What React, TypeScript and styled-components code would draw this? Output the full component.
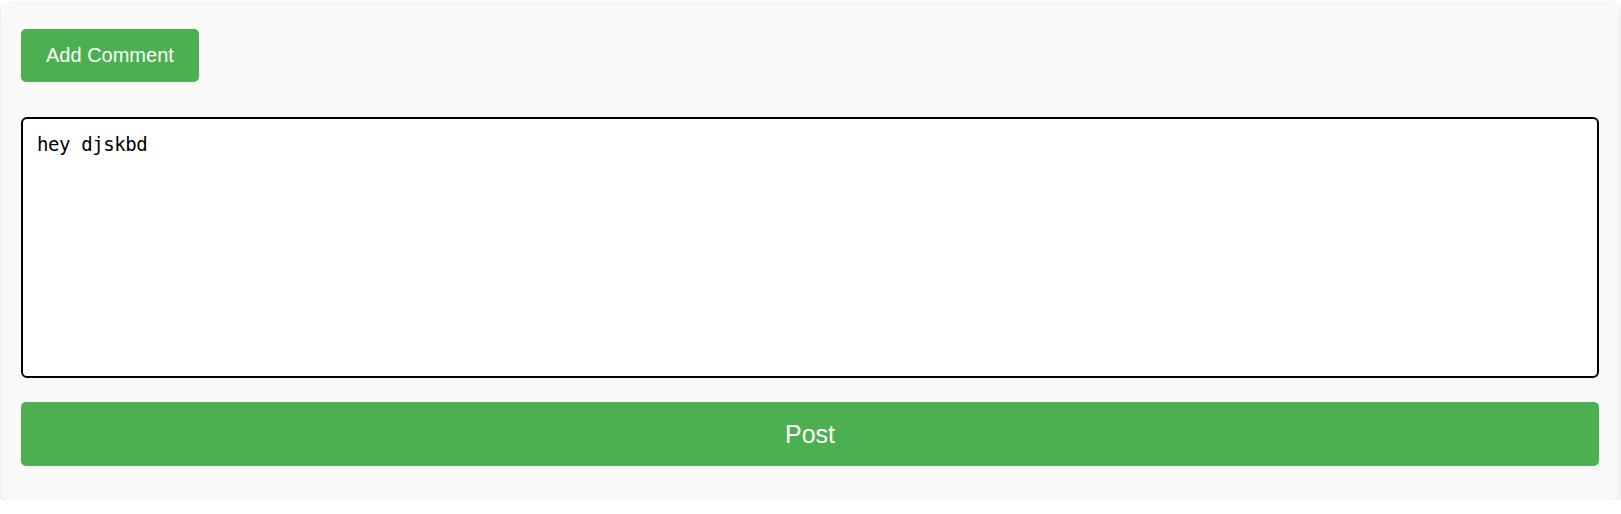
import React, { useState } from "react";
import styled, { createGlobalStyle } from "styled-components";

const GlobalStyle = createGlobalStyle`
  html, body {
    margin: 0;
    padding: 0;
    background: #ffffff;
  }
  body {
    padding-top: 4px;
    font-family: "Liberation Sans", Arial, sans-serif;
  }
`;

const Panel = styled.section`
  box-sizing: border-box;
  width: 1618px;
  margin-left: 1px;
  height: 496px;
  padding: 25px 20px 20px 20px;
  background: #f9f9f9;
  border-radius: 8px;
  box-shadow: 0 2px 8px rgba(0, 0, 0, 0.15);
  display: flex;
  flex-direction: column;
  align-items: flex-start;
`;

const GreenButton = styled.button<{ $wide?: boolean }>`
  box-sizing: border-box;
  border: none;
  border-radius: 5px;
  background: #4caf50;
  color: #ffffff;
  font-family: "Liberation Sans", Arial, sans-serif;
  cursor: pointer;
  font-size: ${(p) => (p.$wide ? "25px" : "20px")};
  line-height: ${(p) => (p.$wide ? "28px" : "23px")};
  padding: ${(p) => (p.$wide ? "18px 0" : "15px 25px")};
  width: ${(p) => (p.$wide ? "100%" : "auto")};
  height: ${(p) => (p.$wide ? "64px" : "53px")};
`;

const CommentBox = styled.textarea`
  box-sizing: border-box;
  display: block;
  width: 100%;
  height: 261px;
  margin: 35px 0 24px 0;
  padding: 13px 14px;
  border: 2px solid #000000;
  border-radius: 6px;
  background: #ffffff;
  color: #000000;
  font-family: "DejaVu Sans Mono", "Liberation Mono", monospace;
  font-size: 19px;
  letter-spacing: -0.4px;
  line-height: 24px;
  resize: none;
  outline: none;
`;

export default function App() {
  const [text, setText] = useState("hey djskbd");
  return (
    <>
      <GlobalStyle />
      <Panel>
        <GreenButton>Add Comment</GreenButton>
        <CommentBox value={text} onChange={(e) => setText(e.target.value)} />
        <GreenButton $wide>Post</GreenButton>
      </Panel>
    </>
  );
}
